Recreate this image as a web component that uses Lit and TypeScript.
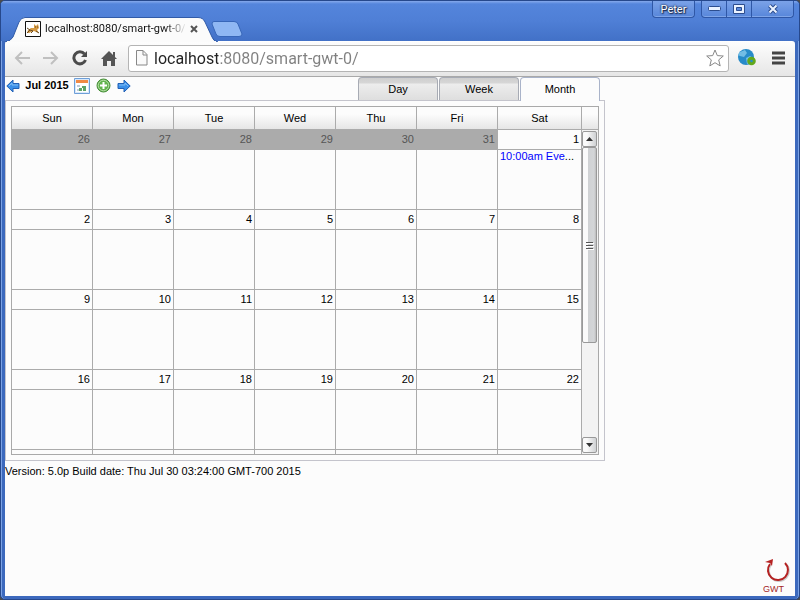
import { LitElement, html, css } from "lit";
import { customElement, property } from "lit/decorators.js";
import { classMap } from "lit/directives/class-map.js";

const reset = css`
  * { box-sizing: border-box; }
  button { margin: 0; padding: 0; border: 0; background: none; font: inherit; color: inherit; display: flex; align-items: center; justify-content: center; }
  svg { display: block; }
`;

@customElement("browser-frame")
class BrowserFrame extends LitElement {
  static styles = [reset, css`
    :host { display: flex; flex-direction: column; min-height: 100vh; background: #3c69bd; border: 1px solid #26488c; border-radius: 5px; box-sizing: border-box; padding: 0 4px 3px 4px; position: relative; box-shadow: inset 1px 0 #7ba2e4, inset -1px 0 #7ba2e4; font-family: Roboto, sans-serif; }
    .title { display: flex; height: 40px; margin: 0 -4px; background: linear-gradient(#85a9ec, #5485dc 3px, #4f7fd6 20px, #4271c7); border-radius: 4px 4px 0 0; align-items: flex-start; padding: 0 5px 0 4px; }
    .tab { position: relative; width: 213px; height: 24px; margin-top: 16px; display: flex; align-items: center; padding: 0 8px 0 20px; }
    .shape { position: absolute; inset: 0; width: 213px; height: 25px; }
    .fav, .name, .close { position: relative; }
    .name { flex: none; width: 140px; margin-left: 4px; white-space: nowrap; font-size: 11px; line-height: 16px; color: #111; -webkit-mask-image: linear-gradient(90deg, #000 120px, transparent 142px); }
    .close { width: 14px; height: 16px; margin-left: 2px; }
    .new { margin: 20px 0 0 -7px; }
    .spacer { flex: 1; }
    .user, .group { border: 1px solid #2f57a6; border-top: 0; border-radius: 0 0 4px 4px; height: 17px; background: linear-gradient(#7ba2e8, #5786da); box-shadow: inset 0 -1px #7fa5e8; }
    .title .user { width: 43px; font-size: 11px; color: #fff; text-shadow: 0 0 2px #1c2c50, 0 0 2px #1c2c50, 1px 1px 1px #1c2c50; }
    .group { display: flex; margin-left: 6px; }
    .group button { width: 25px; height: 16px; border-right: 1px solid #2f57a6; }
    .group button:last-child { width: 41px; border-right: 0; }
    .bar { display: flex; align-items: center; height: 36px; padding: 0 8px 2px 7px; background: linear-gradient(#fdfdfd, #e6e6e6); border-bottom: 1px solid #a9a9a9; border-top: 1px solid #fff; border-radius: 3px 3px 0 0; }
    .nav { width: 20px; height: 20px; margin-right: 9px; }
    .address { flex: 1; display: flex; align-items: center; height: 27px; border: 1px solid #b4b4b4; border-radius: 3px; background: #fff; padding: 0 4px 0 6px; min-width: 0; }
    .url { flex: 1; min-width: 0; border: 0; outline: 0; padding: 0; margin-left: 6px; height: 25px; font: 16px/25px Roboto, sans-serif; color: transparent; background: linear-gradient(90deg, #222 64px, #808080 64px); -webkit-background-clip: text; background-clip: text; }
    .globe { margin-left: 8px; }
    .menu { margin: 0 2px 0 15px; }
    .page { flex: 1; background: #fcfcfc; min-width: 0; position: relative; }
  `];
  render() {
    return html`
      <header class="title">
        <div class="tab">
          <svg class="shape" viewBox="0 0 213 25"><path d="M0 25Q6 24 8 20L14 5Q16 .5 20 .5H193Q198 .5 200 5L207 20Q208 24 213 25Z" fill="#fbfbfb" stroke="#315ba8"/><path d="M2 25H211" stroke="#fbfbfb" stroke-width="2"/></svg>
          <svg class="fav" width="16" height="16" viewBox="0 0 16 16"><path d="M.5.5h15v15H.5z" fill="#fff" stroke="#111"/><path d="M2 12L3 9 6 7 9 7 9 3l2 2 2-2 1 4-2 2 2 3-3-1-2-1-3 1-2 1z" fill="#d69a42"/><path d="M2 7l3 2M2 12l3-3 3 1M6 12l2-2M10 6h1M13 6h-1M11 10l3 2" stroke="#684b25" fill="none"/></svg>
          <span class="name">localhost:8080/smart-gwt-0/</span>
          <button class="close" aria-label="Close tab"><svg width="8" height="8"><path d="M1 1l6 6M7 1l-6 6" stroke="#555" stroke-width="2"/></svg></button>
        </div>
        <button class="new" aria-label="New tab"><svg width="32" height="16"><path d="M3 .5H23Q26 .5 27 3L31 13Q31 15.500 28 15.500H9Q6 15.500 5 13L1 3Q1 .5 3 .5Z" fill="#8fb7f3" stroke="#3766b8"/></svg></button>
        <div class="spacer"></div>
        <button class="user">Peter</button>
        <div class="group">
          <button aria-label="Minimize"><svg width="13" height="6"><rect x=".5" y=".5" width="12" height="4" rx="1" fill="#eaf2ff" stroke="#2c4d8e"/></svg></button>
          <button aria-label="Maximize"><svg width="13" height="11"><path d="M.5.5h11v9H.5z" fill="#eaf2ff" stroke="#2c4d8e"/><path d="M3.500 3.500h5v3h-5z" fill="#5a89dc" stroke="#2c4d8e"/></svg></button>
          <button aria-label="Close"><svg width="12" height="11"><path d="M2.500 1.500l7 7M9.500 1.500l-7 7" stroke="#2c4d8e" stroke-width="4"/><path d="M2.500 1.500l7 7M9.500 1.500l-7 7" stroke="#eaf2ff" stroke-width="2"/></svg></button>
        </div>
      </header>
      <nav class="bar">
        <button class="nav" aria-label="Back"><svg width="18" height="16"><path d="M17 8H3M9 2L3 8l6 6" fill="none" stroke="#c0c0c0" stroke-width="2"/></svg></button>
        <button class="nav" aria-label="Forward"><svg width="18" height="16"><path d="M1 8h14M9 2l6 6-6 6" fill="none" stroke="#c0c0c0" stroke-width="2"/></svg></button>
        <button class="nav" aria-label="Reload"><svg width="16" height="16"><path d="M12.500 4A6 6 0 1 0 13.500 10" fill="none" stroke="#4b4b4b" stroke-width="3"/><path d="M15 1v6H9z" fill="#4b4b4b"/></svg></button>
        <button class="nav" aria-label="Home"><svg width="16" height="16"><path d="M8 1L0 9h2v7h4v-5h4v5h4V9h2l-2-2V2h-2v3z" fill="#555"/></svg></button>
        <div class="address">
          <svg width="13" height="16"><path d="M1.500.5H8l4 4v10.500H1.500z" fill="#fafafa" stroke="#888"/><path d="M8 .5v4.500h4" fill="none" stroke="#888"/></svg>
          <input class="url" aria-label="Address" value="localhost:8080/smart-gwt-0/">
          <button aria-label="Bookmark"><svg width="18" height="18"><path d="M9 1l2.300 5.600 6 .4-4.600 3.900 1.500 6L9 13.700 3.800 16.900l1.500-6L.7 7l6-.4z" fill="#fff" stroke="#888"/></svg></button>
        </div>
        <button class="globe" aria-label="GWT developer plugin"><svg width="20" height="18"><circle cx="9" cy="8" r="8" fill="#278bc9"/><path d="M3 3l5-2 2 3-3 4-4-1-2-1zM9 9l4-2 3 2-3 5-3 1z" fill="#72bde5"/><circle cx="14.500" cy="12" r="2.800" fill="#278bc9" stroke="#62a81c" stroke-width="3"/></svg></button>
        <button class="menu" aria-label="Menu"><svg width="13" height="14"><path d="M0 2h13M0 7h13M0 12h13" stroke="#444" stroke-width="3"/></svg></button>
      </nav>
      <main class="page"><slot></slot></main>`;
  }
}

@customElement("scroll-rail")
class ScrollRail extends LitElement {
  static styles = [reset, css`
    :host { display: flex; flex-direction: column; background: #f3f3f3; padding: 1px 1px 1px 0; }
    button { border: 1px solid #999; border-radius: 2px; background: linear-gradient(90deg, #fafafa 30%, #cfd1d3); }
    .step { height: 16px; flex: none; }
    .thumb { height: 196px; background: linear-gradient(90deg, #fafafa 35%, #cfd1d3 40%, #d4d6d8 85%, #bbb); }
    .gap { flex: 1; }
  `];
  render() {
    return html`
      <button class="step" aria-label="Scroll up"><svg width="7" height="4"><path d="M0 4L3.500 0 7 4z" fill="#333"/></svg></button>
      <button class="thumb" aria-label="Scroll position"><svg width="8" height="9"><path d="M0 1.500h7M0 4.500h7M0 7.500h7" stroke="#555"/><path d="M1 2.500h7M1 5.500h7M1 8.500h7" stroke="#fff"/></svg></button>
      <div class="gap"></div>
      <button class="step" aria-label="Scroll down"><svg width="7" height="4"><path d="M0 0h7L3.500 4z" fill="#333"/></svg></button>`;
  }
}

@customElement("month-calendar")
class MonthCalendar extends LitElement {
  @property({ type: String }) month = "Jul 2015";
  static styles = [reset, css`
    :host { display: block; max-width: 600px; font: 11px/13px "Liberation Sans", Arial, sans-serif; color: #000; }
    .top { display: flex; justify-content: space-between; height: 23px; padding-right: 5px; }
    .tools { display: flex; align-items: center; height: 17px; padding-left: 1px; }
    .month { width: 54px; text-align: center; font-weight: bold; }
    .pick { margin-right: 6px; }
    .add { margin-right: 6px; }
    .views { display: flex; gap: 1px; align-items: flex-start; }
    .view { width: 80px; height: 23px; border: 1px solid #a7abb4; border-bottom: 0; border-radius: 4px 4px 0 0; background: linear-gradient(#cfcfcf, #d6d6d6 5px, #ededed 6px, #dedede); }
    .view.on { height: 24px; position: relative; border-color: #a9b3c9; background: #fcfcfc; padding-bottom: 1px; }
    .frame { border: 1px solid #c4c4cc; padding: 5px; }
    .grid { display: flex; border: 1px solid #a9a9a9; }
    .clip { flex: 1; height: 347px; overflow: hidden; min-width: 0; }
    table { width: 100%; table-layout: fixed; border-spacing: 0; }
    th, td { padding: 0; border: solid #ababab; border-width: 0 1px 1px 0; }
    th { width: 81px; height: 23px; font-weight: normal; background: linear-gradient(#fcfcfc 7px, #e6e6e6); }
    th:last-child { width: auto; }
    td { height: 80px; vertical-align: top; }
    .date { height: 20px; padding: 3px 2px 0 0; text-align: right; border-bottom: 1px solid #ababab; }
    .other { background: #ababab; color: #555; margin-right: -1px; padding-right: 3px; }
    .event { padding-left: 2px; white-space: nowrap; overflow: hidden; }
    a { color: #00f; text-decoration: none; }
    .side { display: flex; flex-direction: column; width: 16px; }
    .corner { height: 23px; border-bottom: 1px solid #ababab; background: linear-gradient(#fcfcfc 7px, #e6e6e6); }
    scroll-rail { flex: 1; }
  `];
  private arrow(flip: boolean) {
    return html`<svg width="14" height="14" viewBox="0 0 14 14"><g transform=${flip ? "translate(14 0) scale(-1 1)" : "translate(0 0)"}><path d="M.8 7L7 1v3.500h6v5H7V13z" fill="#3a8fe8" stroke="#2260b5"/><path d="M3 7l3-3v2h6" fill="none" stroke="#7fbcf5"/></g></svg>`;
  }
  render() {
    const names = ["Sun", "Mon", "Tue", "Wed", "Thu", "Fri", "Sat"];
    const weeks = [0, 1, 2, 3].map((w) => names.map((_, d) => w * 7 + d - 5));
    return html`
      <div class="top">
        <div class="tools">
          <button aria-label="Previous month">${this.arrow(false)}</button>
          <span class="month">${this.month}</span>
          <button class="pick" aria-label="Choose a date"><svg width="16" height="16"><path d="M.5.5h15v15H.5z" fill="#d8e8fa" stroke="#6e9fd8"/><path d="M2 4h12v10H2z" fill="#fff"/><path d="M2 2h12v3H2z" fill="#f18a45"/><path d="M3 7h3v2H3zM3 11h3v2H3z" fill="#bfcbd8"/><path d="M5 10h3v3H5zM8 8h4v2H8zM9 10h3v3H9z" fill="#5fa468"/></svg></button>
          <button class="add" aria-label="Add event"><svg width="15" height="15"><circle cx="7.500" cy="7.500" r="6.500" fill="#62b44d" stroke="#458c38"/><circle cx="7.500" cy="7.500" r="5.300" fill="none" stroke="#b7dda8"/><path d="M7.500 4v7M4 7.500h7" stroke="#fff" stroke-width="2"/></svg></button>
          <button aria-label="Next month">${this.arrow(true)}</button>
        </div>
        <div class="views" role="tablist">
          ${["Day", "Week", "Month"].map((v) => html`<button role="tab" aria-selected=${v === "Month"} class=${classMap({ view: true, on: v === "Month" })}>${v}</button>`)}
        </div>
      </div>
      <div class="frame">
        <div class="grid">
          <div class="clip">
            <table>
              <thead><tr>${names.map((n) => html`<th scope="col">${n}</th>`)}</tr></thead>
              <tbody>
                ${weeks.map((w) => html`<tr>${w.map((n) => html`<td>
                  <div class=${classMap({ date: true, other: n < 1 })}>${n < 1 ? n + 31 : n}</div>
                  ${n === 1 ? html`<div class="event"><a href="#event">10:00am Eve</a>...</div>` : ""}
                </td>`)}</tr>`)}
                <tr>${names.map(() => html`<td></td>`)}</tr>
              </tbody>
            </table>
          </div>
          <div class="side"><div class="corner"></div><scroll-rail></scroll-rail></div>
        </div>
      </div>`;
  }
}

@customElement("app-root")
class AppRoot extends LitElement {
  static styles = css`
    :host { display: block; background: #4c4c4c; }
    .version { margin: 4px 0 0; font: 11px/13px "Liberation Sans", Arial, sans-serif; color: #000; }
    .gwt { position: absolute; right: 4px; bottom: 1px; width: 28px; font: 9px/11px "Liberation Sans", Arial, sans-serif; color: #a32626; }
    .gwt svg { display: block; margin: 0 0 2px 2px; }
  `;
  render() {
    return html`<browser-frame>
      <month-calendar></month-calendar>
      <p class="version">Version: 5.0p Build date: Thu Jul 30 03:24:00 GMT-700 2015</p>
      <div class="gwt">
        <svg width="26" height="25" viewBox="0 0 26 25"><path d="M6 8A10 10 0 1 0 21 7" fill="none" stroke="#ccc" stroke-width="2"/><path d="M5 7A10 10 0 1 0 20 6" fill="none" stroke="#b52222" stroke-width="2"/><path d="M0 5l8-3-1 7-2-3z" fill="#b52222"/></svg>
        GWT
      </div>
    </browser-frame>`;
  }
}
